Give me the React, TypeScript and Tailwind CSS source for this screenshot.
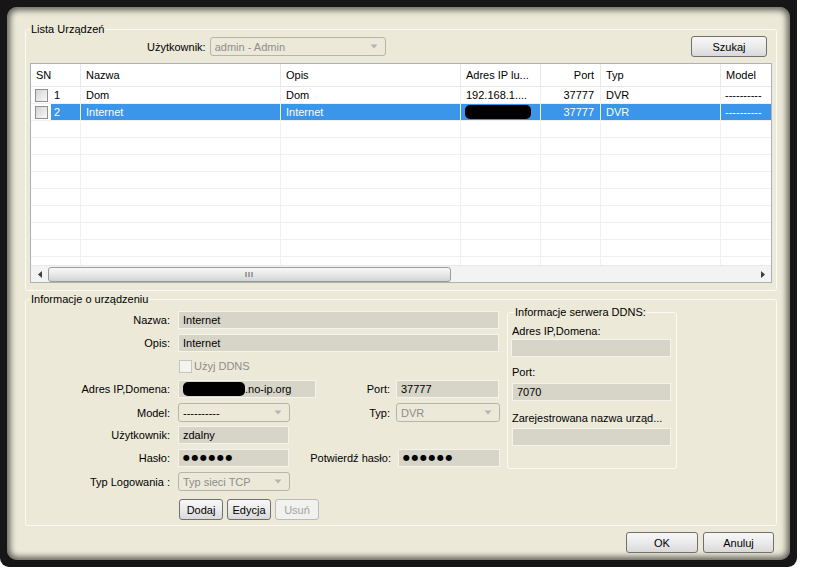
import React from "react";

type Row = {
  sn: string;
  nazwa: string;
  opis: string;
  ip: string | null;
  port: string;
  typ: string;
  model: string;
  selected?: boolean;
};

const rows: Row[] = [
  { sn: "1", nazwa: "Dom", opis: "Dom", ip: "192.168.1....", port: "37777", typ: "DVR", model: "----------" },
  { sn: "2", nazwa: "Internet", opis: "Internet", ip: null, port: "37777", typ: "DVR", model: "----------", selected: true },
];

const emptyRows = Array.from({ length: 9 });

function Arrow({ dim }: { dim?: boolean }) {
  return (
    <svg width="8" height="5" viewBox="0 0 8 5" className="shrink-0">
      <path d="M0.5 0.5 L7.5 0.5 L4 4.5 Z" fill={dim ? "#b4b4b4" : "#8a8a8a"} />
    </svg>
  );
}

function Combo({ value, dim, className }: { value: string; dim?: boolean; className: string }) {
  return (
    <div
      className={`h-[19px] rounded-[3px] border border-[#b5b5b0] bg-[#ece9d8] flex items-center justify-between pl-[4px] pr-[7px] ${className}`}
    >
      <span className={dim ? "text-[#8d8d8d]" : "text-black"}>{value}</span>
      <Arrow dim />
    </div>
  );
}

function Field({ className, children }: { className: string; children?: React.ReactNode }) {
  return (
    <div className={`h-[18px] border border-[#f4f3ee] bg-[#d7d4c8] flex items-center pl-[4px] ${className}`}>
      {children}
    </div>
  );
}

function Btn({ label, className, disabled }: { label: string; className: string; disabled?: boolean }) {
  return (
    <button
      className={`h-[21px] rounded-[3px] border flex items-center justify-center ${
        disabled
          ? "border-[#b8bcbf] bg-[#f1f1ee] text-[#a3a3a3]"
          : "border-[#707070] bg-gradient-to-b from-[#f7f7f7] via-[#ebebeb] to-[#d9d9d9] text-black"
      } ${className}`}
    >
      {label}
    </button>
  );
}

function Check() {
  return (
    <div className="w-[13px] h-[13px] shrink-0 border border-[#8e8f8f] bg-gradient-to-br from-[#d4d4d4] to-[#f8f8f8]" />
  );
}

function Blob({ className }: { className: string }) {
  return <div className={`h-[14px] bg-black rounded-[5px] ${className}`} />;
}

function Dots() {
  return <span className="text-[8px] tracking-[1.5px] font-['DejaVu_Sans',sans-serif]">●●●●●●</span>;
}

function Label({ children, className }: { children: React.ReactNode; className: string }) {
  return <div className={`text-right shrink-0 ${className}`}>{children}</div>;
}

export default function App() {
  return (
    <div className="w-[819px] h-[569px] bg-white font-['Liberation_Sans',Arial,sans-serif] text-[11px] leading-[14px] text-black">
      <div className="w-[797px] h-[567px] bg-[#161616] rounded-b-[9px] p-[7px]">
        <div className="h-full rounded-[10px] bg-[#ece9d8] shadow-[inset_0_0_6px_3px_rgba(0,0,0,0.6)] pl-[18px] pt-[15px]">
          {/* Lista Urządzeń */}
          <fieldset className="w-[752px] h-[269px] border border-[#fbfaf6] rounded-[3px] px-[4px]">
            <legend className="px-[1px]">Lista Urządzeń</legend>
            <div className="flex items-start h-[27px]">
              <div className="flex items-center mt-[1px] ml-[117px]">
                <span className="mr-[4px]">Użytkownik:</span>
                <Combo value="admin - Admin" dim className="w-[176px]" />
              </div>
              <Btn label="Szukaj" className="ml-auto mr-[5px] w-[76px]" />
            </div>
            <div className="w-[742px] h-[220px] border border-[#a9b1b9] bg-white overflow-hidden flex flex-col">
              <div className="flex-1 overflow-hidden">
                <div className="flex h-[23px] border-b border-[#e6e6e6] whitespace-nowrap">
                  <div className="w-[50px] shrink-0 pl-[5px] flex items-center border-r border-[#e6e6e6]">SN</div>
                  <div className="w-[200px] shrink-0 pl-[5px] flex items-center border-r border-[#e6e6e6]">Nazwa</div>
                  <div className="w-[180px] shrink-0 pl-[5px] flex items-center border-r border-[#e6e6e6]">Opis</div>
                  <div className="w-[80px] shrink-0 pl-[5px] flex items-center border-r border-[#e6e6e6]">Adres IP lu...</div>
                  <div className="w-[60px] shrink-0 pr-[6px] flex items-center justify-end border-r border-[#e6e6e6]">Port</div>
                  <div className="w-[120px] shrink-0 pl-[5px] flex items-center border-r border-[#e6e6e6]">Typ</div>
                  <div className="w-[80px] shrink-0 pl-[5px] flex items-center border-r border-[#e6e6e6]">Model</div>
                </div>
                {rows.map((r) => {
                  const sel = r.selected ? "bg-[#3b95e8] text-white" : "";
                  return (
                    <div key={r.sn} className="flex h-[17px] whitespace-nowrap">
                      <div className="w-[50px] shrink-0 flex items-center pl-[4px] border-r border-b border-[#f0f0f0]">
                        <Check />
                        <div className={`ml-[3px] h-full flex-1 flex items-center pl-[3px] ${sel}`}>{r.sn}</div>
                      </div>
                      <div className={`w-[200px] shrink-0 pl-[5px] flex items-center border-r border-b border-[#f0f0f0] ${sel}`}>{r.nazwa}</div>
                      <div className={`w-[180px] shrink-0 pl-[5px] flex items-center border-r border-b border-[#f0f0f0] ${sel}`}>{r.opis}</div>
                      <div className={`w-[80px] shrink-0 pl-[5px] flex items-center border-r border-b border-[#f0f0f0] ${sel}`}>
                        {r.ip ?? <Blob className="w-[66px] -ml-[1px]" />}
                      </div>
                      <div className={`w-[60px] shrink-0 pr-[6px] flex items-center justify-end border-r border-b border-[#f0f0f0] ${sel}`}>{r.port}</div>
                      <div className={`w-[120px] shrink-0 pl-[5px] flex items-center border-r border-b border-[#f0f0f0] ${sel}`}>{r.typ}</div>
                      <div className={`w-[80px] shrink-0 pl-[4px] flex items-center border-r border-b border-[#f0f0f0] ${sel}`}>{r.model}</div>
                    </div>
                  );
                })}
                {emptyRows.map((_, i) => (
                  <div key={i} className="flex h-[17px]">
                    <div className="w-[50px] shrink-0 border-r border-b border-[#f0f0f0]" />
                    <div className="w-[200px] shrink-0 border-r border-b border-[#f0f0f0]" />
                    <div className="w-[180px] shrink-0 border-r border-b border-[#f0f0f0]" />
                    <div className="w-[80px] shrink-0 border-r border-b border-[#f0f0f0]" />
                    <div className="w-[60px] shrink-0 border-r border-b border-[#f0f0f0]" />
                    <div className="w-[120px] shrink-0 border-r border-b border-[#f0f0f0]" />
                    <div className="w-[80px] shrink-0 border-r border-b border-[#f0f0f0]" />
                  </div>
                ))}
              </div>
              {/* horizontal scrollbar */}
              <div className="h-[17px] shrink-0 flex items-center bg-[#f3f3f3] border-t border-[#e8e8e8]">
                <div className="w-[17px] h-full flex items-center justify-center">
                  <svg width="4" height="7" viewBox="0 0 4 7">
                    <path d="M4 0 L0 3.5 L4 7 Z" fill="#3c3c3c" />
                  </svg>
                </div>
                <div className="w-[403px] h-[15px] rounded-[3px] border border-[#9c9c9c] bg-gradient-to-b from-[#f8f8f8] via-[#e8e8e8] to-[#d3d3d3] flex items-center justify-center">
                  <span className="text-[7px] leading-[7px] tracking-[1px] text-[#6a6a6a] font-bold">III</span>
                </div>
                <div className="flex-1" />
                <div className="w-[17px] h-full flex items-center justify-center">
                  <svg width="4" height="7" viewBox="0 0 4 7">
                    <path d="M0 0 L4 3.5 L0 7 Z" fill="#3c3c3c" />
                  </svg>
                </div>
              </div>
            </div>
          </fieldset>

          {/* Informacje o urządzeniu */}
          <fieldset className="mt-[1px] w-[752px] h-[234px] border border-[#fbfaf6] rounded-[3px] px-[4px]">
            <legend className="px-[1px]">Informacje o urządzeniu</legend>
            <div className="flex items-start gap-[7px]">
              <div className="w-[470px] flex flex-col">
                <div className="flex items-center gap-[8px] mt-[5px]">
                  <Label className="w-[140px]">Nazwa:</Label>
                  <Field className="w-[321px]">Internet</Field>
                </div>
                <div className="flex items-center gap-[8px] mt-[5px]">
                  <Label className="w-[140px]">Opis:</Label>
                  <Field className="w-[321px]">Internet</Field>
                </div>
                <div className="flex items-center h-[14px] mt-[7px] pl-[149px]">
                  <div className="w-[13px] h-[13px] border border-[#c5c5c0] bg-[#f4f3ee]" />
                  <span className="ml-[2px] text-[#8d8d8d]">Użyj DDNS</span>
                </div>
                <div className="flex items-center mt-[7px]">
                  <Label className="w-[140px]">Adres IP,Domena:</Label>
                  <Field className="ml-[8px] w-[138px] pl-[2px]">
                    <Blob className="w-[62px]" />
                    <span>.no-ip.org</span>
                  </Field>
                  <Label className="w-[74px]">Port:</Label>
                  <Field className="ml-[6px] w-[103px]">37777</Field>
                </div>
                <div className="flex items-center mt-[5px]">
                  <Label className="w-[140px]">Model:</Label>
                  <Combo value="----------" className="ml-[8px] w-[112px]" />
                  <Label className="w-[100px]">Typ:</Label>
                  <Combo value="DVR" dim className="ml-[6px] w-[104px]" />
                </div>
                <div className="flex items-center gap-[8px] mt-[4px]">
                  <Label className="w-[140px]">Użytkownik:</Label>
                  <Field className="w-[111px]">zdalny</Field>
                </div>
                <div className="flex items-center mt-[5px]">
                  <Label className="w-[140px]">Hasło:</Label>
                  <Field className="ml-[8px] w-[111px]">
                    <Dots />
                  </Field>
                  <Label className="w-[102px]">Potwierdź hasło:</Label>
                  <Field className="ml-[7px] w-[102px]">
                    <Dots />
                  </Field>
                </div>
                <div className="flex items-center gap-[8px] mt-[5px]">
                  <Label className="w-[140px]">Typ Logowania :</Label>
                  <Combo value="Typ sieci TCP" dim className="w-[112px]" />
                </div>
                <div className="flex items-center gap-[4px] mt-[8px] pl-[149px]">
                  <Btn label="Dodaj" className="w-[44px]" />
                  <Btn label="Edycja" className="w-[44px]" />
                  <Btn label="Usuń" disabled className="w-[44px]" />
                </div>
              </div>

              <fieldset className="-mt-[1px] w-[170px] h-[164px] border border-[#fbfaf6] rounded-[3px] px-[4px]">
                <legend className="ml-[2px] px-[1px]">Informacje serwera DDNS:</legend>
                <div className="mt-[5px]">Adres IP,Domena:</div>
                <Field className="mt-[1px] -ml-[1px] w-[160px]" />
                <div className="mt-[8px]">Port:</div>
                <Field className="mt-[4px] w-[159px]">7070</Field>
                <div className="mt-[10px] whitespace-nowrap">Zarejestrowana nazwa urząd...</div>
                <Field className="mt-[3px] w-[159px]" />
              </fieldset>
            </div>
          </fieldset>

          <div className="w-[749px] flex justify-end gap-[5px] mt-[6px]">
            <Btn label="OK" className="w-[72px]" />
            <Btn label="Anuluj" className="w-[71px]" />
          </div>
        </div>
      </div>
    </div>
  );
}
